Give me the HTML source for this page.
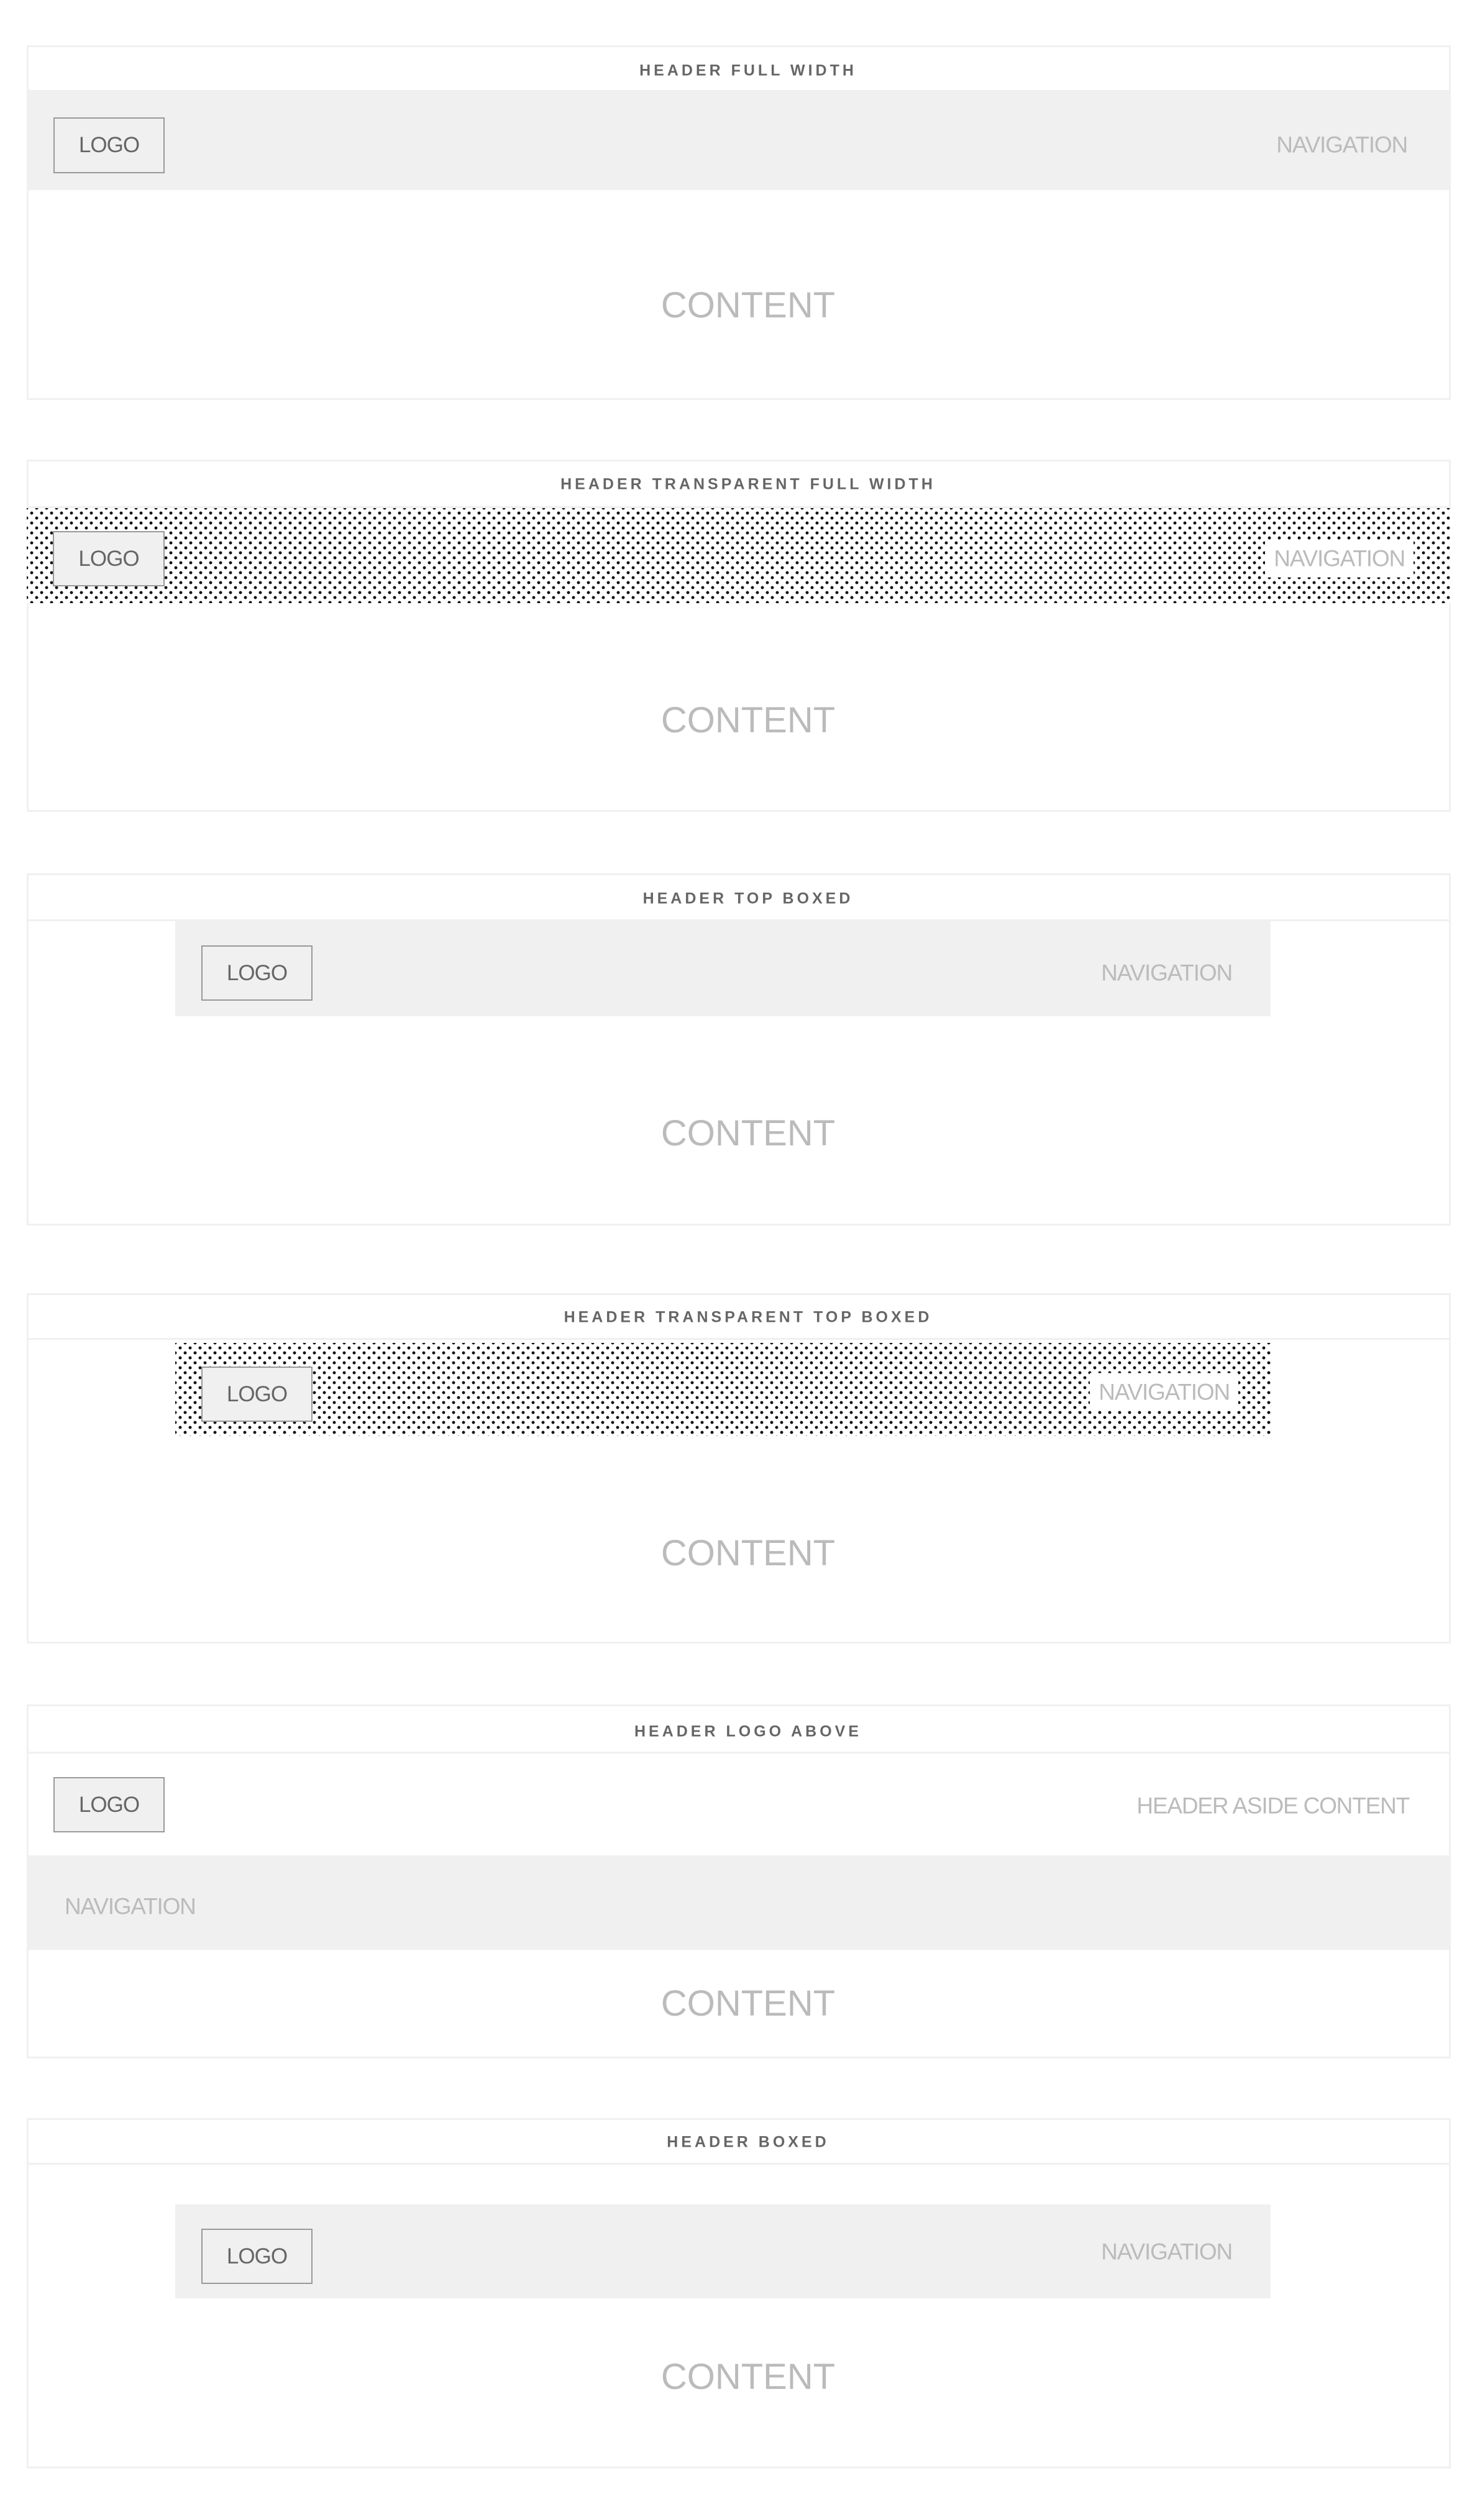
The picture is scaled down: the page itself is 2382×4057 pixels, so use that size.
<!DOCTYPE html>
<html><head><meta charset="utf-8"><style>
html,body{margin:0;padding:0;background:#fff;}
body{width:2382px;height:4057px;position:relative;overflow:hidden;font-family:"Liberation Sans",sans-serif;}
.box{position:absolute;left:43px;width:2286px;border:3px solid #f0f0f0;background:#fff;}
.a{position:absolute;}
.t{position:absolute;line-height:1;white-space:nowrap;transform:translateY(-50%);}
.title{left:0;width:2408px;text-align:center;font-weight:bold;font-size:25px;letter-spacing:5px;color:#666;}
.band{position:absolute;background:#f0f0f0;}
.dots{position:absolute;background-color:#fff;background-image:radial-gradient(circle,#111 2.2px,transparent 2.7px),radial-gradient(circle,#111 2.2px,transparent 2.7px);background-size:16px 16px;background-position:0 0,8px 8px;}
.logo{position:absolute;box-sizing:border-box;border:2px solid #999;background:#f0f0f0;color:#666;font-size:35px;display:flex;align-items:center;justify-content:center;letter-spacing:-1px;}
.nav{font-size:37px;color:#bbb;letter-spacing:-1.2px;}
.navw{background:#fff;padding:12px 14px;}
.content{left:0;width:2408px;text-align:center;font-size:58px;color:#bbb;}
</style></head><body>

<div class="box" style="top:73px;height:565px;"></div>
<div class="a" style="left:43px;top:145px;width:2292px;height:3px;background:#f0f0f0"></div>
<div class="t title" style="top:114px">HEADER FULL WIDTH</div>
<div class="band" style="left:43px;top:148px;width:2292px;height:158px"></div>
<div class="logo" style="left:86px;top:189px;width:179px;height:90px">LOGO</div>
<div class="t nav" style="right:117px;top:233px">NAVIGATION</div>
<div class="t content" style="top:492px">CONTENT</div>

<div class="box" style="top:740px;height:561px;"></div>
<div class="a" style="left:43px;top:815px;width:2292px;height:3px;background:#f0f0f0"></div>
<div class="t title" style="top:780px">HEADER TRANSPARENT FULL WIDTH</div>
<div class="dots" style="left:43px;top:818px;width:2292px;height:153px"></div>
<div class="logo" style="left:85px;top:855px;width:180px;height:89px">LOGO</div>
<div class="t nav navw" style="right:107px;top:899px">NAVIGATION</div>
<div class="t content" style="top:1160px">CONTENT</div>

<div class="box" style="top:1406px;height:561px;"></div>
<div class="a" style="left:43px;top:1480px;width:2292px;height:3px;background:#f0f0f0"></div>
<div class="t title" style="top:1447px">HEADER TOP BOXED</div>
<div class="band" style="left:282px;top:1483px;width:1763px;height:153px"></div>
<div class="logo" style="left:324px;top:1522px;width:179px;height:89px">LOGO</div>
<div class="t nav" style="right:399px;top:1566px">NAVIGATION</div>
<div class="t content" style="top:1825px">CONTENT</div>

<div class="box" style="top:2082px;height:558px;"></div>
<div class="a" style="left:43px;top:2154px;width:2292px;height:3px;background:#f0f0f0"></div>
<div class="t title" style="top:2121px">HEADER TRANSPARENT TOP BOXED</div>
<div class="dots" style="left:282px;top:2162px;width:1763px;height:150px"></div>
<div class="logo" style="left:324px;top:2200px;width:179px;height:89px">LOGO</div>
<div class="t nav navw" style="right:389px;top:2241px">NAVIGATION</div>
<div class="t content" style="top:2501px">CONTENT</div>

<div class="box" style="top:2744px;height:564px;"></div>
<div class="a" style="left:43px;top:2820px;width:2292px;height:3px;background:#f0f0f0"></div>
<div class="t title" style="top:2788px">HEADER LOGO ABOVE</div>
<div class="logo" style="left:86px;top:2861px;width:179px;height:89px">LOGO</div>
<div class="t nav" style="right:114px;top:2907px">HEADER ASIDE CONTENT</div>
<div class="band" style="left:43px;top:2987px;width:2292px;height:152px"></div>
<div class="t nav" style="left:104px;top:3069px">NAVIGATION</div>
<div class="t content" style="top:3226px">CONTENT</div>

<div class="box" style="top:3410px;height:558px;"></div>
<div class="a" style="left:43px;top:3482px;width:2292px;height:3px;background:#f0f0f0"></div>
<div class="t title" style="top:3449px">HEADER BOXED</div>
<div class="band" style="left:282px;top:3549px;width:1763px;height:151px"></div>
<div class="logo" style="left:324px;top:3588px;width:179px;height:89px">LOGO</div>
<div class="t nav" style="right:399px;top:3625px">NAVIGATION</div>
<div class="t content" style="top:3827px">CONTENT</div>

</body></html>
